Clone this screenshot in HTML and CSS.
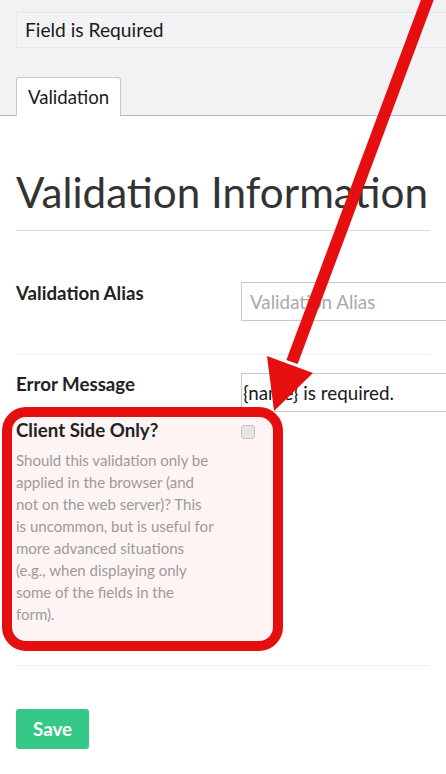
FILE: index.html
```html
<html lang="en">
  <head>
    <link rel="stylesheet" href="styles.css">
  </head>
  <body>
    <div id="top-panel">
      <div class="field-box">Field is Required</div>
      <div class="tabs">
        <div class="tab">Validation</div>
      </div>
    </div>
    <div id="content">
      <h1>Validation Information</h1>
      <div class="form-row row-alias">
        <label class="label-col" for="alias">Validation Alias</label>
        <div class="input-col">
          <input id="alias" class="text-input" type="text" placeholder="Validation Alias">
        </div>
      </div>
      <div class="form-row row-error">
        <label class="label-col" for="error-msg">Error Message</label>
        <div class="input-col">
          <input id="error-msg" class="text-input tight" type="text" value="{name} is required.">
        </div>
      </div>
      <div class="form-row row-client">
        <div class="highlight"></div>
        <div class="label-col">
          <label class="label-big" for="client-only">Client Side Only?</label>
          <p class="hint">Should this validation only be applied in the browser (and not on the web server)? This is uncommon, but is useful for more advanced situations (e.g., when displaying only some of the fields in the form).</p>
        </div>
        <div class="input-col">
          <input id="client-only" class="check" type="checkbox">
        </div>
      </div>
      <button class="save-button" type="button">Save</button>
    </div>
    <svg class="arrow" width="446" height="774" viewBox="0 0 446 774">
      <line x1="431" y1="-10" x2="292" y2="362" stroke="#e60f0f" stroke-width="12"/>
      <polygon points="267,356 313,373 274,411" fill="#e60f0f"/>
    </svg>
  </body>
</html>
```

FILE: styles.css
```css
body, html {
  margin: 0;
  width: 100%;
  height: 100%;
  overflow: hidden;
  background: #fff;
  color: #222;
  font-family: Lato, 'Open Sans', sans-serif;
}
body {
  position: relative;
}
#top-panel {
  height: 116px;
  box-sizing: border-box;
  padding: 12px 0 0 16px;
  background: #f2f2f5;
  border-bottom: solid 1px #b9b9c6;
}
.field-box {
  width: 600px;
  height: 36px;
  box-sizing: border-box;
  padding-left: 8px;
  border: solid 1px #e7e7ec;
  background: #f3f3f6;
  font-size: 19.2px;
  line-height: 34px;
  color: #1a1a1a;
}
.tabs {
  margin-top: 29px;
  display: flex;
}
.tab {
  height: 39px;
  box-sizing: border-box;
  padding: 0 11px;
  background: #fff;
  border: solid 1px #c6c6cf;
  border-bottom: none;
  border-radius: 3px 3px 0 0;
  font-size: 18.6px;
  line-height: 38px;
  color: #1a1a1a;
}
#content {
  padding: 0 16px;
}
h1 {
  margin: 52px 0 0;
  padding-bottom: 15px;
  border-bottom: solid 1px #dadada;
  font-size: 42.2px;
  font-weight: 400;
  line-height: 47px;
  color: #333;
  white-space: nowrap;
}
.form-row {
  display: flex;
  align-items: flex-start;
}
.label-col {
  width: 225px;
  flex: none;
  font-size: 18.7px;
  font-weight: bold;
  line-height: 1.2;
}
.input-col {
  flex: none;
}
.row-alias {
  padding: 51px 0 33px;
  border-bottom: solid 1px #eeeeee;
}
.row-error {
  padding-top: 18px;
}
.text-input {
  width: 400px;
  height: 39px;
  box-sizing: border-box;
  margin: 0;
  padding: 0 8px;
  border: solid 1px #c9c9c9;
  border-radius: 0;
  outline: none;
  background: #fff;
  color: #1a1a1a;
  font-family: Lato, 'Open Sans', sans-serif;
  font-size: 18.8px;
}
.text-input::placeholder {
  color: #a9a9ad;
}
.text-input.tight {
  padding: 0 1px;
}
.row-client {
  position: relative;
  z-index: 0;
  padding: 6.5px 0 40px;
  border-bottom: solid 1px #eeeeee;
}
.highlight {
  position: absolute;
  z-index: -1;
  left: -14px;
  top: -5px;
  width: 281px;
  height: 244px;
  box-sizing: border-box;
  border: solid 10px #e60f0f;
  border-radius: 24px;
  background: #fdf4f3;
}
.label-big {
  display: block;
  color: #222;
}
.hint {
  width: 198px;
  margin: 8px 0 0;
  font-size: 15px;
  font-weight: normal;
  line-height: 22px;
  color: #9b9b9b;
}
.check {
  appearance: none;
  width: 14px;
  height: 14px;
  margin: 6px 0 0;
  border: solid 1px #c4c0c0;
  border-radius: 3px;
  background: #e9e5e5;
}
.save-button {
  margin-top: 43px;
  height: 40px;
  padding: 0 17px;
  border: none;
  border-radius: 3px;
  background: #36c887;
  color: #fff;
  font-family: Lato, 'Open Sans', sans-serif;
  font-size: 18.7px;
  font-weight: bold;
  cursor: pointer;
}
.arrow {
  position: absolute;
  left: 0;
  top: 0;
  pointer-events: none;
}
```
